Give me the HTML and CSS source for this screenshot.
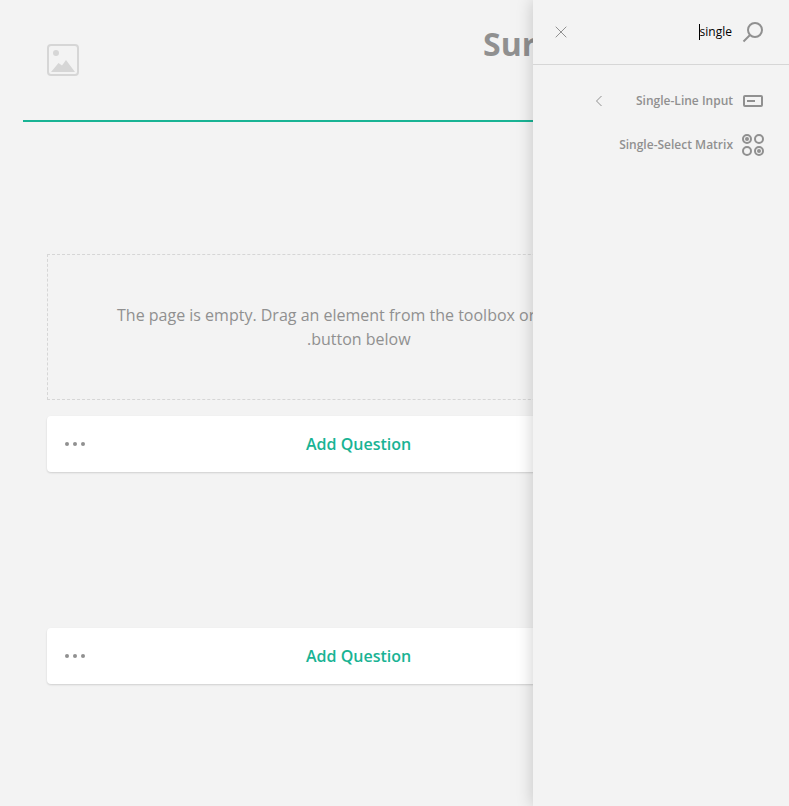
FILE: index.html
```html
<!DOCTYPE html>
<html lang="en">
<head>
<meta charset="utf-8">
<title>Survey Creator</title>
<link rel="stylesheet" href="styles.css">
</head>
<body>
<div class="creator">
  <main class="surface">
    <header class="survey-header">
      <svg class="logo" width="32" height="32" viewBox="0 0 32 32">
        <rect x="1" y="1" width="30" height="30" rx="3" fill="none" stroke="#d6d6d6" stroke-width="2"/>
        <circle cx="9" cy="9" r="3" fill="#d6d6d6"/>
        <path d="M4 28L11.500 19L15 21.500L19 16L28 28Z" fill="#d6d6d6"/>
      </svg>
      <h1 class="title">Sur</h1>
    </header>
    <section class="page">
      <div class="empty">
        <p>The page is empty. Drag an element from the toolbox or</p>
        <p class="last">.button below</p>
      </div>
      <div class="add">
        <svg class="dots" width="20" height="4" viewBox="0 0 20 4"><circle cx="2" cy="2" r="2"/><circle cx="10" cy="2" r="2"/><circle cx="18" cy="2" r="2"/></svg>
        <span>Add Question</span>
      </div>
    </section>
    <section class="page ghost">
      <div class="add">
        <svg class="dots" width="20" height="4" viewBox="0 0 20 4"><circle cx="2" cy="2" r="2"/><circle cx="10" cy="2" r="2"/><circle cx="18" cy="2" r="2"/></svg>
        <span>Add Question</span>
      </div>
    </section>
  </main>
  <aside class="toolbox">
    <div class="search">
      <svg class="close" width="12" height="12" viewBox="0 0 12 12"><path d="M.7.7L11.300 11.300M11.300.7L.7 11.300"/></svg>
      <span class="query">single</span>
      <svg class="icon" width="24" height="24" viewBox="0 0 24 24"><circle cx="14" cy="10" r="7"/><path d="M9 15L2.500 21.500"/></svg>
    </div>
    <div class="item">
      <svg class="arrow" width="8" height="12" viewBox="0 0 8 12"><path d="M6.500 1L1.500 6L6.500 11"/></svg>
      <span>Single-Line Input</span>
      <svg class="icon" width="24" height="24" viewBox="0 0 24 24"><rect x="3" y="7" width="18" height="10" rx="1"/><path d="M6 12H14"/></svg>
    </div>
    <div class="item">
      <span>Single-Select Matrix</span>
      <svg class="icon" width="24" height="24" viewBox="0 0 24 24"><circle cx="6" cy="6" r="4"/><circle cx="18" cy="6" r="4"/><circle cx="6" cy="18" r="4"/><circle cx="18" cy="18" r="4"/><circle class="fill" cx="6" cy="6" r="2"/><circle class="fill" cx="18" cy="18" r="2"/></svg>
    </div>
  </aside>
</div>
</body>
</html>
```
FILE: styles.css
```css
* { box-sizing: border-box; }
body {
  margin: 0;
  background: #f3f3f3;
  color: #909090;
  font-family: "Open Sans", sans-serif;
}
.creator { display: flex; height: 806px; overflow: hidden; }
.surface { width: 533px; flex: none; overflow: hidden; padding-left: 23px; }
.survey-header {
  display: flex;
  width: 672px;
  height: 122px;
  padding: 22px 24px 0;
  border-bottom: 2px solid #19b394;
}
.logo { margin-top: 22px; }
.title { margin: 0 0 0 404px; font-size: 32px; line-height: 44px; font-weight: 700; }
.page { width: 672px; padding: 0 24px; margin-top: 132px; }
.ghost { margin-top: 156px; }
.empty {
  height: 146px;
  padding: 48px 0 0 69px;
  border: 1px dashed #d6d6d6;
  font-size: 16px;
  line-height: 24px;
  white-space: nowrap;
}
.empty p { margin: 0; }
.empty .last { padding-left: 190px; }
.add {
  display: flex;
  align-items: center;
  height: 56px;
  margin-top: 16px;
  padding-left: 18px;
  border-radius: 4px;
  background: #fff;
  box-shadow: 0 1px 2px rgba(0, 0, 0, .15);
  color: #19b394;
  font-size: 16px;
  line-height: 24px;
  font-weight: 600;
}
.add span { margin-left: 221px; }
.dots { fill: #909090; }
.toolbox {
  position: relative;
  width: 256px;
  flex: none;
  background: #f3f3f3;
  box-shadow: 0 0 16px rgba(0, 0, 0, .2);
  font-size: 12px;
  line-height: 16px;
}
.search, .item { display: flex; align-items: center; justify-content: flex-end; gap: 8px; padding-right: 24px; }
.search { height: 65px; margin-bottom: 14px; border-bottom: 1px solid #d6d6d6; }
.item { height: 44px; font-weight: 600; }
.close { margin: 0 auto 0 22px; }
.query { margin-right: 1px; border-left: 1px solid #000; color: #000; }
.arrow { margin-right: 25px; }
.icon { fill: none; stroke: #909090; stroke-width: 2; }
.icon .fill { fill: #909090; stroke: none; }
.close, .arrow { fill: none; stroke: #909090; stroke-width: 1; }
```
